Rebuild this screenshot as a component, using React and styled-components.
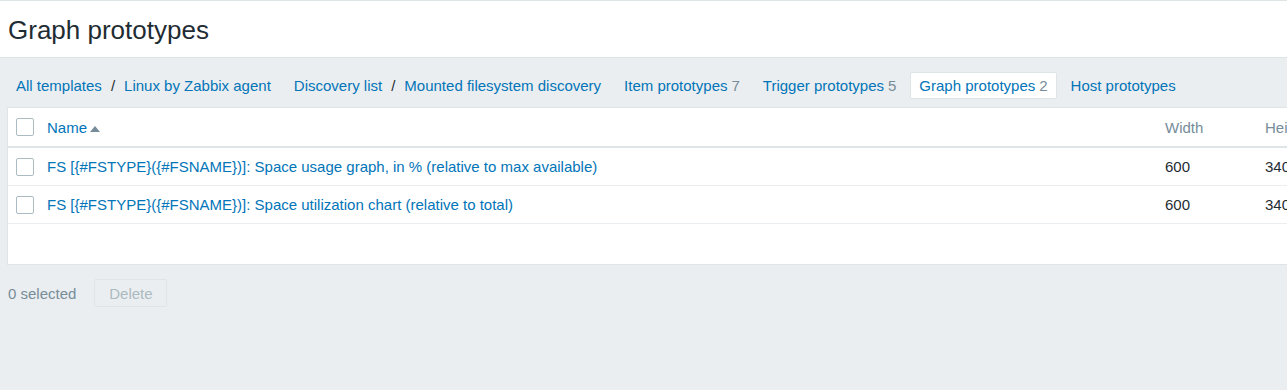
import React from "react";
import styled, { createGlobalStyle } from "styled-components";

const GlobalStyle = createGlobalStyle`
  html, body {
    margin: 0;
    padding: 0;
    background: #ebeef0;
    overflow: hidden;
  }
  body {
    font-family: "Liberation Sans", Arial, sans-serif;
    font-size: 15px;
    color: #1f2c33;
  }
`;

const Header = styled.header`
  background: #fff;
  border-top: 1px solid #dfe4e7;
  border-bottom: 1px solid #dfe4e7;
  height: 56px;
  display: flex;
  align-items: center;
  padding: 0 8px;

  h1 {
    margin: 0;
    font-size: 26px;
    font-weight: normal;
    color: #1f2c33;
    padding-top: 2px;
  }
`;

const Main = styled.main`
  padding: 13px 0 0 7px;
  width: 1600px;
`;

const Tabs = styled.nav`
  display: flex;
  align-items: center;
  gap: 5px;
  height: 28px;
  margin-bottom: 8px;
`;

const Tab = styled.div`
  display: flex;
  align-items: center;
  height: 27px;
  padding: 0 8px;
  box-sizing: border-box;
  border: 1px solid ${(p) => (p.$active ? "#dfe4e7" : "transparent")};
  border-radius: 2px;
  background: ${(p) => (p.$active ? "#fff" : "transparent")};
  white-space: nowrap;
`;

const Link = styled.a`
  color: #0275b8;
  text-decoration: none;
  cursor: pointer;
`;

const Sep = styled.span`
  color: #1f2c33;
  margin: 0 9px;
`;

const Count = styled.span`
  color: #768d99;
  margin-left: 4px;
`;

const TableBox = styled.div`
  background: #fff;
  border: 1px solid #dfe4e7;
  border-right: none;
  padding-bottom: 40px;
`;

const Table = styled.table`
  width: 100%;
  border-collapse: collapse;
  table-layout: fixed;
`;

const Th = styled.th`
  height: 38px;
  padding: 0 8px;
  text-align: left;
  font-weight: normal;
  color: #768d99;
  border-bottom: 2px solid #dfe4e7;
  vertical-align: middle;
  white-space: nowrap;
  overflow: hidden;
`;

const Td = styled.td`
  height: 37px;
  padding: 0 8px;
  border-bottom: 1px solid #ebeef0;
  vertical-align: middle;
  white-space: nowrap;
  overflow: hidden;
  color: #1f2c33;
`;

const Check = styled.span`
  display: block;
  width: 18px;
  height: 18px;
  box-sizing: border-box;
  border: 1px solid #acbbc2;
  border-radius: 2px;
  background: #fff;
`;

const SortArrow = styled.span`
  display: inline-block;
  width: 0;
  height: 0;
  margin-left: 3px;
  border-left: 5px solid transparent;
  border-right: 5px solid transparent;
  border-bottom: 6px solid #768d99;
  vertical-align: 1px;
`;

const Footer = styled.div`
  display: flex;
  align-items: center;
  gap: 18px;
  padding: 14px 0 0 1px;

  span {
    color: #768d99;
  }
`;

const Button = styled.button`
  height: 28px;
  width: 73px;
  font-family: inherit;
  font-size: 15px;
  color: #acbbc2;
  background: #ebeef0;
  border: 1px solid #dfe4e7;
  border-radius: 2px;
`;

const rows = [
  "FS [{#FSTYPE}({#FSNAME})]: Space usage graph, in % (relative to max available)",
  "FS [{#FSTYPE}({#FSNAME})]: Space utilization chart (relative to total)",
];

export default function App() {
  return (
    <>
      <GlobalStyle />
      <Header>
        <h1>Graph prototypes</h1>
      </Header>
      <Main>
        <Tabs>
          <Tab>
            <Link>All templates</Link>
            <Sep>/</Sep>
            <Link>Linux by Zabbix agent</Link>
          </Tab>
          <Tab>
            <Link>Discovery list</Link>
            <Sep>/</Sep>
            <Link>Mounted filesystem discovery</Link>
          </Tab>
          <Tab>
            <Link>Item prototypes</Link>
            <Count>7</Count>
          </Tab>
          <Tab>
            <Link>Trigger prototypes</Link>
            <Count>5</Count>
          </Tab>
          <Tab $active>
            <Link>Graph prototypes</Link>
            <Count>2</Count>
          </Tab>
          <Tab>
            <Link>Host prototypes</Link>
          </Tab>
        </Tabs>
        <TableBox>
          <Table>
            <colgroup>
              <col style={{ width: 31 }} />
              <col style={{ width: 1118 }} />
              <col style={{ width: 100 }} />
              <col style={{ width: 100 }} />
              <col />
            </colgroup>
            <thead>
              <tr>
                <Th>
                  <Check />
                </Th>
                <Th>
                  <Link>Name</Link>
                  <SortArrow />
                </Th>
                <Th>Width</Th>
                <Th>Height</Th>
                <Th>Graph type</Th>
              </tr>
            </thead>
            <tbody>
              {rows.map((name) => (
                <tr key={name}>
                  <Td>
                    <Check />
                  </Td>
                  <Td>
                    <Link>{name}</Link>
                  </Td>
                  <Td>600</Td>
                  <Td>340</Td>
                  <Td>Normal</Td>
                </tr>
              ))}
            </tbody>
          </Table>
        </TableBox>
        <Footer>
          <span>0 selected</span>
          <Button disabled>Delete</Button>
        </Footer>
      </Main>
    </>
  );
}
